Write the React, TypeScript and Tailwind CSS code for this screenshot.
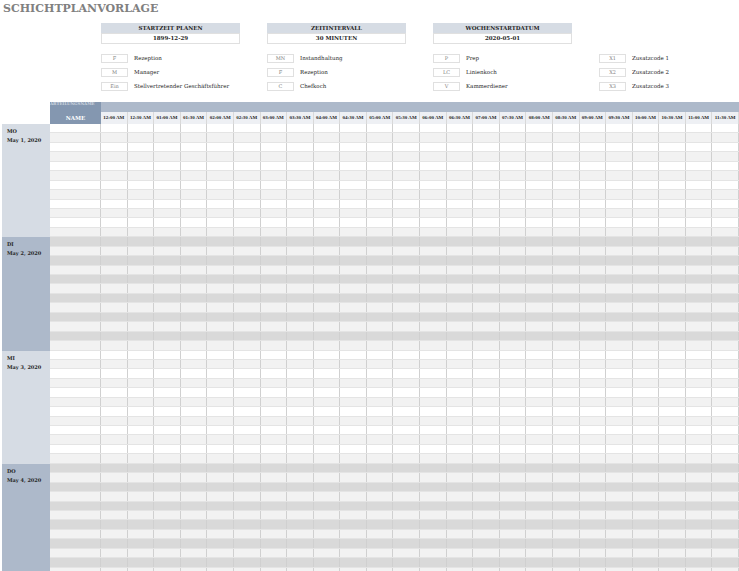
const times = Array.from({ length: 24 }, (_, i) => {
  const h = Math.floor(i / 2);
  const hh = h === 0 ? 12 : h;
  return `${String(hh).padStart(2, "0")}:${i % 2 ? "30" : "00"} AM`;
});

const days = [
  { d: "MO", date: "May 1, 2020", label: "bg-[#d6dce4]", rows: ["bg-white", "bg-[#f2f2f2]"] },
  { d: "DI", date: "May 2, 2020", label: "bg-[#adb9ca]", rows: ["bg-[#d9d9d9]", "bg-[#f2f2f2]"] },
  { d: "MI", date: "May 3, 2020", label: "bg-[#d6dce4]", rows: ["bg-white", "bg-[#f2f2f2]"] },
  { d: "DO", date: "May 4, 2020", label: "bg-[#adb9ca]", rows: ["bg-[#d9d9d9]", "bg-[#f2f2f2]"] },
];

const info = [
  ["STARTZEIT PLANEN", "1899-12-29"],
  ["ZEITINTERVALL", "30 MINUTEN"],
  ["WOCHENSTARTDATUM", "2020-05-01"],
];

const legend = [
  [["F", "Rezeption"], ["M", "Manager"], ["Ein", "Stellvertretender Geschäftsführer"]],
  [["MN", "Instandhaltung"], ["F", "Rezeption"], ["C", "Chefkoch"]],
  [["P", "Prep"], ["LC", "Linienkoch"], ["V", "Kammerdiener"]],
  [["X1", "Zusatzcode 1"], ["X2", "Zusatzcode 2"], ["X3", "Zusatzcode 3"]],
];

export default function App() {
  return (
    <div className="w-[739px] h-[571px] overflow-hidden bg-white text-[#262626]" style={{ fontFamily: '"DejaVu Serif", "Liberation Serif", serif' }}>
      <div className="pl-[3px] pt-[1px] h-[23px] text-[11px] font-bold text-[#808080]">SCHICHTPLANVORLAGE</div>
      <div className="flex pl-[101px] gap-[27px] h-[31px]">
        {info.map(([a, b]) => (
          <div key={a} className="w-[139px] shrink-0">
            <div className="h-[10px] bg-[#d6dce4] text-[5.5px] font-bold flex items-center justify-center">{a}</div>
            <div className="h-[11px] border border-[#e0e0e0] text-[5.5px] font-bold flex items-center justify-center">{b}</div>
          </div>
        ))}
      </div>
      <div className="flex pl-[101px] h-[48px]">
        {legend.map((col, ci) => (
          <div key={ci} className="w-[166px] shrink-0 flex flex-col gap-[5px]">
            {col.map(([c, l]) => (
              <div key={c + l} className="flex items-center h-[9px]">
                <div className="w-[27px] h-[9px] border border-[#e0e0e0] text-[5px] text-[#808080] flex items-center justify-center">{c}</div>
                <div className="ml-[6px] text-[5.5px]">{l}</div>
              </div>
            ))}
          </div>
        ))}
      </div>
      <div className="pl-[2px]">
        <div className="flex h-[10px]">
          <div className="w-[48px]" />
          <div className="w-[51px] bg-[#8497b0] text-[4px] text-white/60 font-bold leading-[4px] overflow-hidden">ABTEILUNGSNAME</div>
          <div className="flex-1 bg-[#adb9ca]" />
        </div>
        <div className="flex h-[12px]">
          <div className="w-[48px]" />
          <div className="w-[51px] bg-[#8497b0] text-white text-[5.5px] font-bold flex items-center justify-center">NAME</div>
          <div className="flex-1 grid grid-cols-[repeat(24,minmax(0,1fr))]">
            {times.map((t) => (
              <div key={t} className="border-r border-[#d9d9d9] bg-[#eef0f4] text-[5px] font-bold flex items-center justify-center whitespace-nowrap overflow-hidden" style={{ fontFamily: '"Liberation Serif", serif' }}>{t}</div>
            ))}
          </div>
        </div>
        {days.map((day) => (
          <div key={day.d} className="flex">
            <div className={`w-[48px] ${day.label} text-[5px] font-bold pl-[5px] pt-[3px] leading-[9px]`}>
              <div>{day.d}</div>
              <div>{day.date}</div>
            </div>
            <div className="flex-1">
              {Array.from({ length: 12 }, (_, r) => (
                <div key={r} className={`flex h-[9.45px] border-b border-[#e4e4e4] ${day.rows[r % 2]}`}>
                  <div className="w-[51px] border-r border-[#d0d0d0]" />
                  <div className="flex-1 grid grid-cols-[repeat(24,minmax(0,1fr))]">
                    {times.map((t) => (
                      <div key={t} className="border-r border-[#d0d0d0]" />
                    ))}
                  </div>
                </div>
              ))}
            </div>
          </div>
        ))}
      </div>
    </div>
  );
}
